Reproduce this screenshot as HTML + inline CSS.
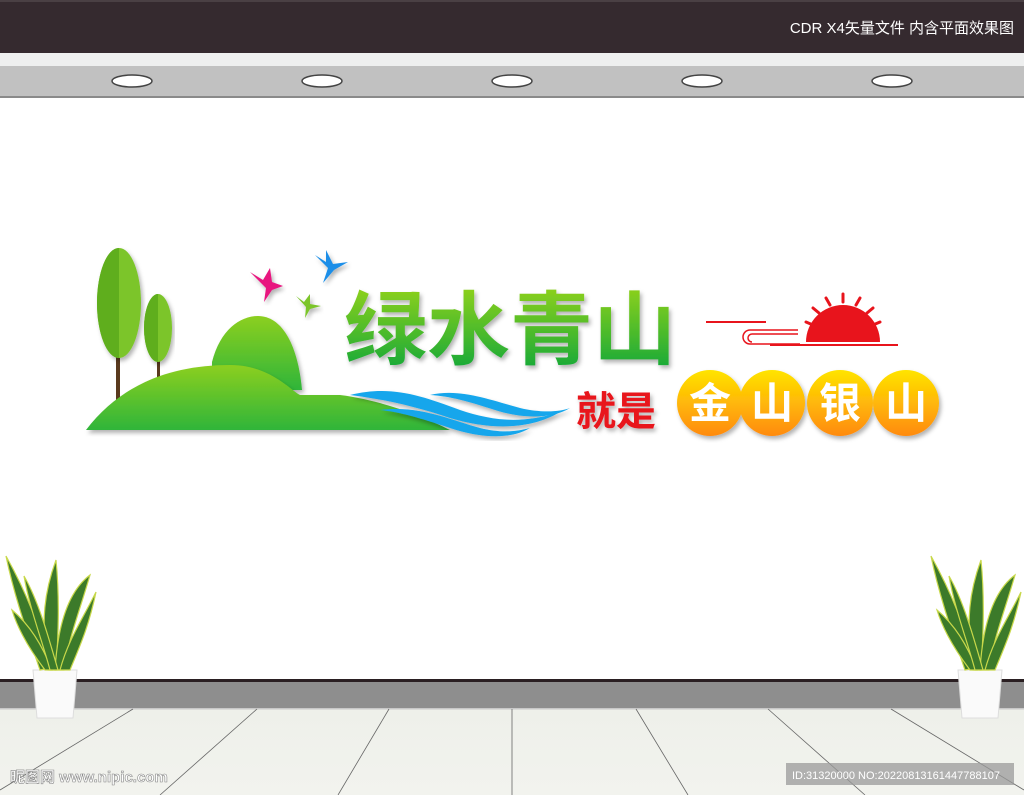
<!DOCTYPE html>
<html><head><meta charset="utf-8"><style>
html,body{margin:0;padding:0;width:1024px;height:795px;overflow:hidden;background:#fff}
svg{display:block}
text{font-family:"Liberation Sans","Noto Sans CJK SC",sans-serif}
</style></head><body>
<svg width="1024" height="795" viewBox="0 0 1024 795" xmlns="http://www.w3.org/2000/svg">
<defs>
<linearGradient id="g1" x1="0" y1="0" x2="0" y2="1"><stop offset="0" stop-color="#8fd11c"/><stop offset="1" stop-color="#0ea63a"/></linearGradient>
<linearGradient id="hill" x1="0" y1="0" x2="0" y2="1"><stop offset="0" stop-color="#8ccf1f"/><stop offset="1" stop-color="#2fb53a"/></linearGradient>
<linearGradient id="orb" x1="0" y1="0" x2="0" y2="1"><stop offset="0" stop-color="#ffe400"/><stop offset="1" stop-color="#ff8a10"/></linearGradient>
<linearGradient id="floor" x1="0" y1="0" x2="0" y2="1"><stop offset="0" stop-color="#eef0ea"/><stop offset="1" stop-color="#f2f3ee"/></linearGradient>
<filter id="sh"><feDropShadow dx="2" dy="3" stdDeviation="2" flood-opacity="0.3"/></filter>
</defs>
<rect width="1024" height="53" fill="#352a2f"/>
<rect y="0" width="1024" height="2" fill="#4a4044"/>
<text x="1014" y="33" font-size="15" fill="#fff" text-anchor="end">CDR X4矢量文件  内含平面效果图</text>
<rect y="53" width="1024" height="13" fill="#eeefef"/>
<rect y="66" width="1024" height="31" fill="#c1c1c1"/>
<rect y="96" width="1024" height="2" fill="#8a8a8a"/>
<g fill="#fff" stroke="#444" stroke-width="1.5">
<ellipse cx="132" cy="81" rx="20" ry="6"/><ellipse cx="322" cy="81" rx="20" ry="6"/><ellipse cx="512" cy="81" rx="20" ry="6"/><ellipse cx="702" cy="81" rx="20" ry="6"/><ellipse cx="892" cy="81" rx="20" ry="6"/>
</g>
<!-- trees -->
<rect x="116" y="340" width="4" height="62" fill="#5a3a1e"/>
<rect x="157" y="355" width="3" height="30" fill="#5a3a1e"/>
<ellipse cx="119" cy="303" rx="22" ry="55" fill="#7cc52a" filter="url(#sh)"/>
<path d="M119 248 A22 55 0 0 0 119 358 Z" fill="#5fae1d"/>
<ellipse cx="158" cy="328" rx="14" ry="34" fill="#7cc52a" filter="url(#sh)"/>
<path d="M158 294 A14 34 0 0 0 158 362 Z" fill="#5fae1d"/>
<!-- hills -->
<path d="M212 362 C220 330 240 316 258 316 C282 316 298 345 302 390 L212 390 Z" fill="url(#hill)" filter="url(#sh)"/>
<path d="M86 430 C120 385 170 365 230 365 C270 365 290 390 300 395 L340 395 C380 400 420 415 450 430 Z" fill="url(#hill)" filter="url(#sh)"/>
<!-- water -->
<g fill="#12a6ec" filter="url(#sh)">
<path d="M350 395 C390 385 420 395 460 410 C490 420 520 425 560 412 C530 430 490 430 450 418 C420 408 390 400 350 395Z"/>
<path d="M430 395 C460 388 490 400 520 408 C540 413 560 412 570 408 C550 420 520 418 495 410 C470 402 450 396 430 395Z"/>
<path d="M380 410 C420 405 450 420 480 428 C500 433 515 432 530 428 C510 440 480 438 450 428 C420 418 400 412 380 410Z"/>
</g>
<!-- birds -->
<path d="M250 272 L263 280 L270 268 L272 282 L283 286 L272 290 L264 302 L266 288 Z" fill="#e8137f" filter="url(#sh)"/>
<path d="M315 255 L326 262 L326 250 L333 264 L348 262 L334 270 L323 283 L328 268 Z" fill="#1b8ee8" filter="url(#sh)"/>
<path d="M296 296 L304 302 L310 294 L310 304 L321 306 L310 309 L305 318 L306 307 Z" fill="#7cc52a" filter="url(#sh)"/>
<!-- title -->
<text x="344" y="358" font-size="80" font-weight="bold" fill="url(#g1)" filter="url(#sh)" textLength="332" lengthAdjust="spacingAndGlyphs">绿水青山</text>
<!-- sun -->
<g fill="#e8141c">
<path d="M806 342 A35 35 0 0 1 880 342 Z"/>
<g stroke="#e8141c" stroke-width="3" stroke-linecap="round">
<line x1="843" y1="294" x2="843" y2="302"/><line x1="826" y1="298" x2="830" y2="305"/><line x1="860" y1="298" x2="856" y2="305"/>
<line x1="813" y1="308" x2="819" y2="313"/><line x1="873" y1="308" x2="867" y2="313"/><line x1="806" y1="322" x2="813" y2="325"/><line x1="880" y1="322" x2="873" y2="325"/>
</g>
<rect x="706" y="321" width="60" height="2"/><rect x="770" y="344" width="128" height="2"/>
</g>
<g fill="none" stroke="#e8141c" stroke-width="1.5">
<path d="M798 330 L750 330 A7 7 0 0 0 750 344 L800 344"/><path d="M798 334 L752 334 A4 4 0 0 0 752 342"/>
</g>
<!-- subtitle -->
<text x="576" y="425" font-size="40" font-weight="bold" fill="#e8141c" filter="url(#sh)">就是</text>
<g filter="url(#sh)">
<circle cx="710" cy="403" r="33" fill="url(#orb)"/><circle cx="772" cy="403" r="33" fill="url(#orb)"/><circle cx="840" cy="403" r="33" fill="url(#orb)"/><circle cx="906" cy="403" r="33" fill="url(#orb)"/>
</g>
<g font-size="42" font-weight="bold" fill="#fff" text-anchor="middle">
<text x="710" y="418">金</text><text x="772" y="418">山</text><text x="840" y="418">银</text><text x="906" y="418">山</text>
</g>
<!-- baseboard & floor -->
<rect y="679" width="1024" height="3" fill="#2a1f22"/>
<rect y="682" width="1024" height="27" fill="#8e8e8e"/>
<rect y="709" width="1024" height="86" fill="url(#floor)"/>
<rect y="708" width="1024" height="1.5" fill="#c8c8c8"/>
<g stroke="#666" stroke-width="0.8">
<line x1="133" y1="709" x2="0" y2="790"/><line x1="257" y1="709" x2="160" y2="795"/><line x1="389" y1="709" x2="338" y2="795"/>
<line x1="512" y1="709" x2="512" y2="795"/><line x1="636" y1="709" x2="688" y2="795"/><line x1="768" y1="709" x2="865" y2="795"/><line x1="891" y1="709" x2="1024" y2="790"/>
</g>
<!-- plants -->
<g id="plant">
<path d="M33 670 L77 670 L73 718 L37 718 Z" fill="#fafafa" stroke="#ddd"/>
<g fill="#3c7a2a" stroke="#c8d84a" stroke-width="1.2">
<path d="M40 670 C30 640 15 600 6 556 C25 590 42 630 50 668Z"/>
<path d="M48 670 C40 620 45 590 56 560 C60 600 58 640 56 670Z"/>
<path d="M55 670 C58 620 70 590 90 575 C80 610 68 640 64 670Z"/>
<path d="M45 670 C30 650 18 630 12 610 C30 625 42 645 52 670Z"/>
<path d="M60 670 C68 640 82 620 96 592 C88 630 78 650 70 670Z"/>
<path d="M50 670 C42 640 30 610 24 576 C38 600 48 635 58 670Z"/>
</g>
</g>
<use href="#plant" transform="translate(925 0)"/>
<text x="10" y="782" font-size="15" font-weight="bold" fill="#fff" stroke="#888" stroke-width="0.6">昵图网 www.nipic.com</text>
<rect x="786" y="763" width="228" height="22" fill="#9a9a9a" opacity="0.75"/>
<text x="792" y="779" font-size="11" fill="#fff">ID:31320000 NO:20220813161447788107</text>
</svg>
</body></html>
